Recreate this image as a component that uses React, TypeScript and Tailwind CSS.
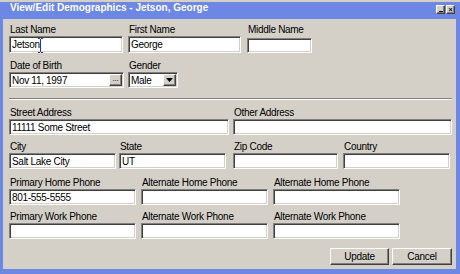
import React from "react";

const sunken =
  "bg-white border border-t-[#808080] border-l-[#808080] border-b-white border-r-white shadow-[inset_1px_1px_0_#404040,inset_-1px_-1px_0_#d4d0c8]";
const raised =
  "bg-[#d4d0c8] border border-t-white border-l-white border-b-[#404040] border-r-[#404040] shadow-[inset_-1px_-1px_0_#808080]";

interface FieldProps {
  label: string;
  w: string;
  value?: string;
  h?: string;
  children?: React.ReactNode;
}

const Field = ({ label, w, value, h = "h-[16px]", children }: FieldProps) => (
  <div className={`flex flex-col ${w}`}>
    <div className="h-[13px] leading-[13px] pl-[1px] text-black whitespace-nowrap">{label}</div>
    <div className={`${sunken} ${h} relative flex items-center pl-[2px] text-black whitespace-nowrap`}>
      {value}
      {children}
    </div>
  </div>
);

const IBeam = () => (
  <svg className="absolute left-[28px] top-[1px]" width="5" height="15" viewBox="0 0 5 15">
    <path d="M0 0.5h2M3 0.5h2M2.5 1v13M0 14.5h2M3 14.5h2" stroke="#1a2ee0" strokeWidth="1" fill="none" />
  </svg>
);

export default function App() {
  return (
    <div className="w-[460px] h-[274px] bg-[#d4d0c8] flex flex-col overflow-hidden text-[10px] tracking-[-0.3px] font-['Liberation_Sans',Arial,sans-serif]">
      <div className="h-[2px] bg-[#d4d0c8]" />
      <div className="flex-1 flex flex-col bg-[#6c87e4] pl-[3px] pr-[4px] pb-[5px]">
        <div className="h-[17px] flex items-start justify-between -mr-[4px] pr-[5px]">
          <div className="pl-[7px] text-white font-bold text-[10px] tracking-normal leading-[12px] whitespace-nowrap">
            View/Edit Demographics - Jetson, George
          </div>
          <div className="flex gap-[1px] mt-[3px]">
            <div className={`${raised} w-[9px] h-[9px] flex items-end justify-center`}>
              <div className="w-[4px] h-[1px] bg-black mb-[1px]" />
            </div>
            <div className={`${raised} w-[9px] h-[9px] flex items-center justify-center text-[7px] leading-[7px] font-bold text-black`}>
              ×
            </div>
          </div>
        </div>
        <div className="flex-1 bg-[#d4d0c8] pl-[6px] pr-[4px] pt-[4px] flex flex-col">
          <div className="flex">
            <Field label="Last Name" w="w-[114px]" value="Jetson" h="h-[17px]">
              <IBeam />
            </Field>
            <div className="w-[5px]" />
            <Field label="First Name" w="w-[113px]" value="George" h="h-[17px]" />
            <div className="w-[6px]" />
            <div className="flex flex-col w-[65px]">
              <div className="h-[13px] leading-[13px] pl-[1px] text-black">Middle Name</div>
              <div className={`${sunken} h-[15px] mt-[2px]`} />
            </div>
          </div>

          <div className="flex mt-[6px]">
            <div className="flex flex-col w-[115px]">
              <div className="h-[13px] leading-[13px] pl-[1px] text-black">Date of Birth</div>
              <div className={`${sunken} h-[16px] flex items-center justify-between pl-[2px] pr-[1px]`}>
                <span className="text-black">Nov 11, 1997</span>
                <div className={`${raised} w-[13px] h-[12px] flex items-center justify-center text-[8px] leading-[8px] text-black pb-[3px]`}>
                  ...
                </div>
              </div>
            </div>
            <div className="w-[4px]" />
            <div className="flex flex-col w-[50px]">
              <div className="h-[13px] leading-[13px] pl-[1px] text-black">Gender</div>
              <div className={`${sunken} h-[16px] flex items-center justify-between pl-[2px] pr-[1px]`}>
                <span className="text-black">Male</span>
                <div className={`${raised} w-[13px] h-[12px] flex items-center justify-center`}>
                  <svg width="7" height="4" viewBox="0 0 7 4">
                    <path d="M0 0h7L3.5 4z" fill="#000" />
                  </svg>
                </div>
              </div>
            </div>
          </div>

          <div className="mt-[10px] w-[443px] border-t border-t-[#808080] border-b border-b-white" />

          <div className="flex mt-[6px]">
            <Field label="Street Address" w="w-[220px]" value="11111 Some Street" />
            <div className="w-[4px]" />
            <Field label="Other Address" w="w-[219px]" />
          </div>

          <div className="flex mt-[5px]">
            <Field label="City" w="w-[107px]" value="Salt Lake City" />
            <div className="w-[3px]" />
            <Field label="State" w="w-[107px]" value="UT" />
            <div className="w-[7px]" />
            <Field label="Zip Code" w="w-[105px]" />
            <div className="w-[5px]" />
            <Field label="Country" w="w-[107px]" />
          </div>

          <div className="flex mt-[7px] gap-[5px]">
            <Field label="Primary Home Phone" w="w-[127px]" value="801-555-5555" />
            <Field label="Alternate Home Phone" w="w-[127px]" />
            <Field label="Alternate Home Phone" w="w-[127px]" />
          </div>

          <div className="flex mt-[5px] gap-[5px]">
            <Field label="Primary Work Phone" w="w-[127px]" />
            <Field label="Alternate Work Phone" w="w-[127px]" />
            <Field label="Alternate Work Phone" w="w-[127px]" />
          </div>

          <div className="flex justify-end gap-[3px] mt-[9px]">
            <button className={`${raised} w-[59px] h-[17px] text-[10px] leading-[10px] text-black`}>Update</button>
            <button className={`${raised} w-[60px] h-[17px] text-[10px] leading-[10px] text-black`}>Cancel</button>
          </div>
        </div>
      </div>
    </div>
  );
}
